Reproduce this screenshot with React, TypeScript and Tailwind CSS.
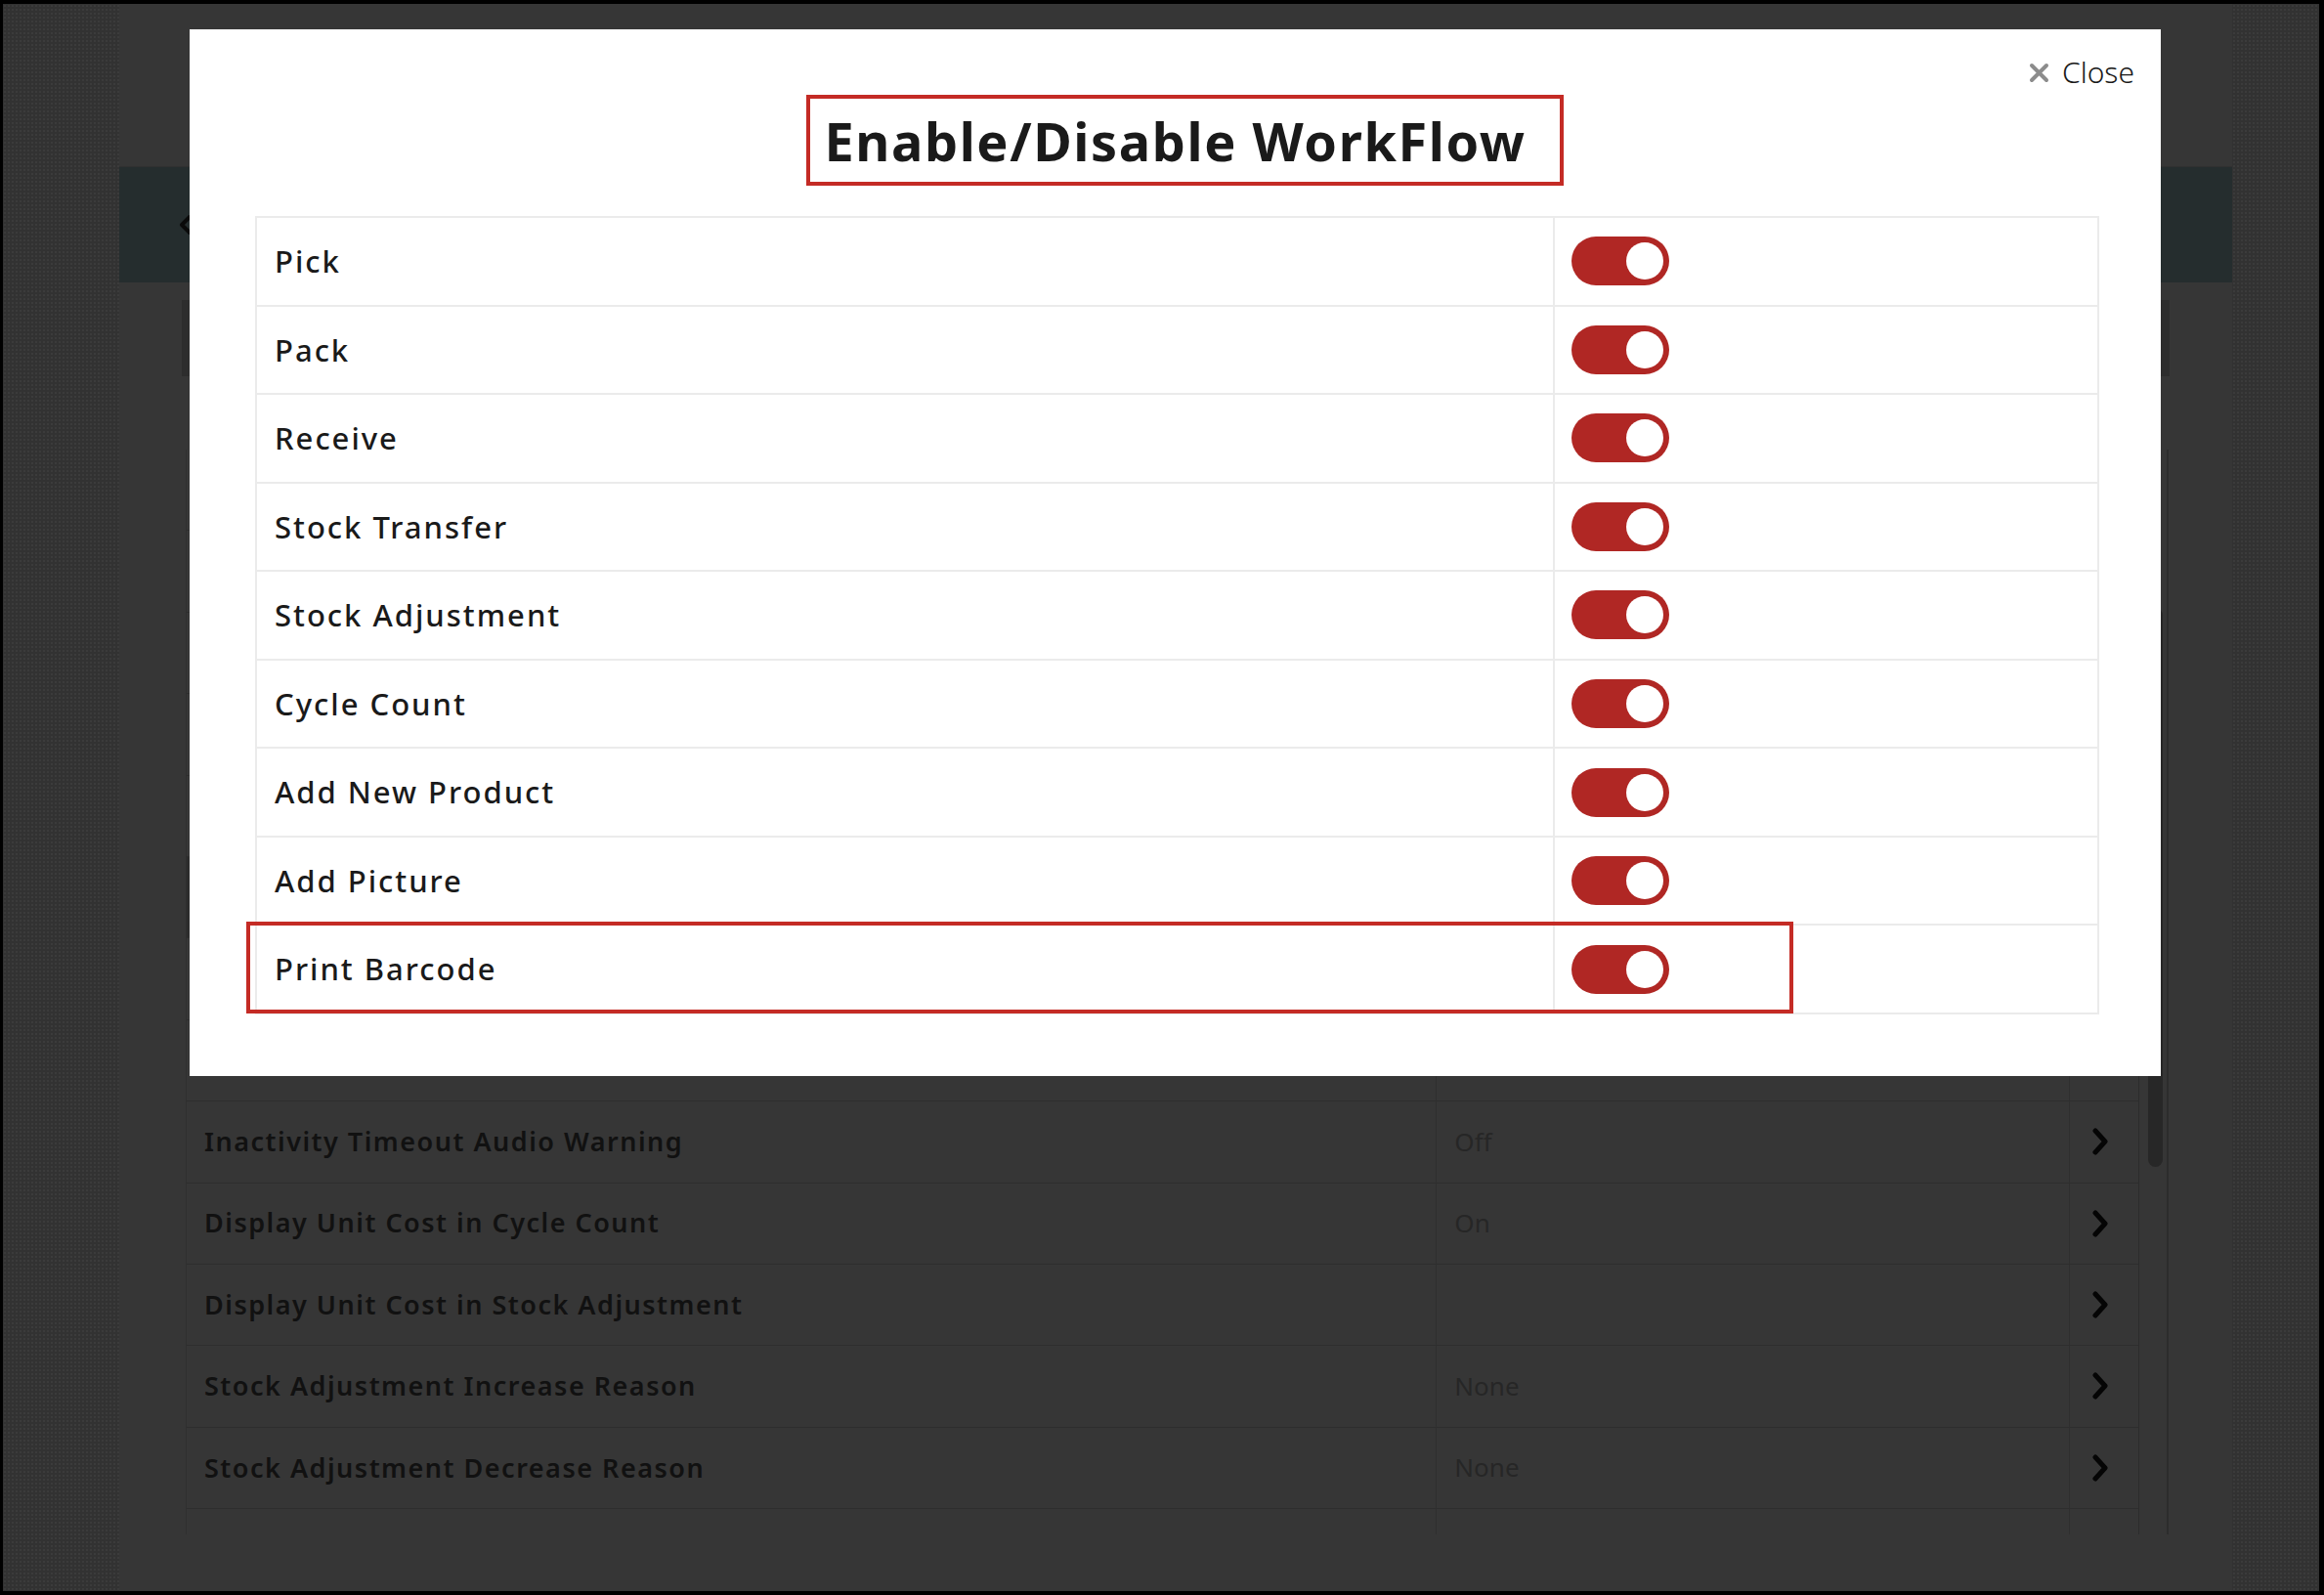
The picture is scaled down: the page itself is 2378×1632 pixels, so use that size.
import React from "react";

const workflows = [
  "Pick",
  "Pack",
  "Receive",
  "Stock Transfer",
  "Stock Adjustment",
  "Cycle Count",
  "Add New Product",
  "Add Picture",
  "Print Barcode",
];

const bgRows: { label: string; value: string; dark?: boolean }[] = [
  { label: "", value: "" },
  { label: "", value: "" },
  { label: "", value: "" },
  { label: "", value: "" },
  { label: "", value: "" },
  { label: "", value: "", dark: true },
  { label: "", value: "" },
  { label: "", value: "" },
  { label: "Inactivity Timeout Audio Warning", value: "Off" },
  { label: "Display Unit Cost in Cycle Count", value: "On" },
  { label: "Display Unit Cost in Stock Adjustment", value: "" },
  { label: "Stock Adjustment Increase Reason", value: "None" },
  { label: "Stock Adjustment Decrease Reason", value: "None" },
  { label: "", value: "" },
];

function Toggle() {
  return (
    <div className="flex h-[50px] w-[100px] items-center justify-end rounded-full bg-[#b02724] pr-[6px]">
      <div className="h-[38px] w-[38px] rounded-full bg-white" />
    </div>
  );
}

function Chevron() {
  return (
    <svg width="18" height="28" viewBox="0 0 18 28">
      <polyline points="4,3 14,14 4,25" fill="none" stroke="#050505" strokeWidth="5" strokeLinecap="round" strokeLinejoin="round" />
    </svg>
  );
}

export default function App() {
  return (
    <div className="relative h-[1632px] w-[2378px] overflow-hidden bg-black pb-[4px] pl-[3px] pr-[5px] pt-[4px] font-['Noto_Sans',sans-serif]">
      <div className="flex h-full w-full">
        {/* left dotted strip */}
        <div className="h-full w-[119px] shrink-0 bg-[#323232] bg-[radial-gradient(#3b3b3b_1px,transparent_1.3px)] bg-[length:4px_4px]" />

        {/* page behind overlay */}
        <div className="flex h-full w-[2162px] shrink-0 flex-col bg-[#363636]">
          <div className="h-[167px] shrink-0 border-b border-[#303030]" />
          <div className="relative flex h-[118px] shrink-0 items-center bg-[#252d2e] pl-[61px]">
            <svg width="14" height="22" viewBox="0 0 14 22">
              <polyline points="11,3 3,11 11,19" fill="none" stroke="#0a0a0a" strokeWidth="4" strokeLinecap="round" strokeLinejoin="round" />
            </svg>
          </div>
          <div className="h-[18px] shrink-0" />
          <div className="ml-[64px] h-[78px] w-[2034px] shrink-0 bg-[#2d2d2d]" />
          <div className="h-[75px] shrink-0" />
          <div className="ml-[68px] flex h-[1110px] shrink-0 overflow-hidden">
            <div className="flex w-[1998px] flex-col border-l border-[#2f2f2f]">
              {bgRows.map((r, i) => (
                <div
                  key={i}
                  className={`flex h-[83.4px] shrink-0 border-b border-[#2e2e2e] ${r.dark ? "bg-[#2c2c2c]" : ""}`}
                >
                  <div className="flex w-[1279px] items-center pl-[18px] text-[27px] font-semibold tracking-[1.5px] text-[#111111]">
                    {r.label}
                  </div>
                  <div className="flex w-[648px] items-center border-l border-[#2f2f2f] pl-[18px] text-[26px] font-normal text-[#262626]">
                    {r.value}
                  </div>
                  <div className="flex w-[71px] items-center border-l border-[#2f2f2f] pl-[22px]">
                    <Chevron />
                  </div>
                </div>
              ))}
            </div>
            <div className="flex w-[31px] border-l border-[#2c2c2c]">
              <div className="ml-[9px] mt-[162px] h-[572px] w-[15px] rounded-full bg-[#272727]" />
              <div className="ml-auto h-full w-[2px] bg-[#2c2c2c]" />
            </div>
          </div>
        </div>

        {/* right dotted strip */}
        <div className="h-full flex-1 bg-[#323232] bg-[radial-gradient(#3b3b3b_1px,transparent_1.3px)] bg-[length:4px_4px]" />
      </div>

      {/* modal */}
      <div className="absolute left-[194px] top-[30px] flex h-[1071px] w-[2017px] flex-col bg-white pt-[67px]">
        <div className="absolute right-[27px] top-[26px] flex items-center gap-[13px]">
          <svg width="21" height="21" viewBox="0 0 21 21">
            <path d="M3 3 L18 18 M18 3 L3 18" stroke="#8c8c8c" strokeWidth="4" strokeLinecap="round" />
          </svg>
          <span className="text-[30px] font-light leading-[36px] text-[#1a1a1a]">Close</span>
        </div>

        <div className="flex h-[93px] shrink-0 items-center justify-center">
          <h1 className="text-[54px] font-bold leading-none tracking-[1.6px] text-[#1a1a1a]">
            Enable/Disable WorkFlow
          </h1>
        </div>
        <div className="pointer-events-none absolute left-[631px] top-[67px] h-[93px] w-[775px] border-[4px] border-[#c42b25]" />

        <div className="ml-[67px] mr-[63px] mt-[31px] flex flex-col border-t-2 border-[#ebebeb]">
          {workflows.map((w) => (
            <div key={w} className="flex h-[90.55px] shrink-0 border-b-2 border-[#ebebeb]">
              <div className="flex w-[1328px] items-center border-l-2 border-[#ebebeb] pl-[18px] text-[31px] font-medium tracking-[2px] text-[#1a1a1a]">
                {w}
              </div>
              <div className="flex flex-1 items-center border-x-2 border-[#ebebeb] pl-[17px]">
                <Toggle />
              </div>
            </div>
          ))}
        </div>
        <div className="pointer-events-none absolute left-[58px] top-[913px] h-[94px] w-[1583px] border-[4px] border-[#c42b25]" />
      </div>
    </div>
  );
}
